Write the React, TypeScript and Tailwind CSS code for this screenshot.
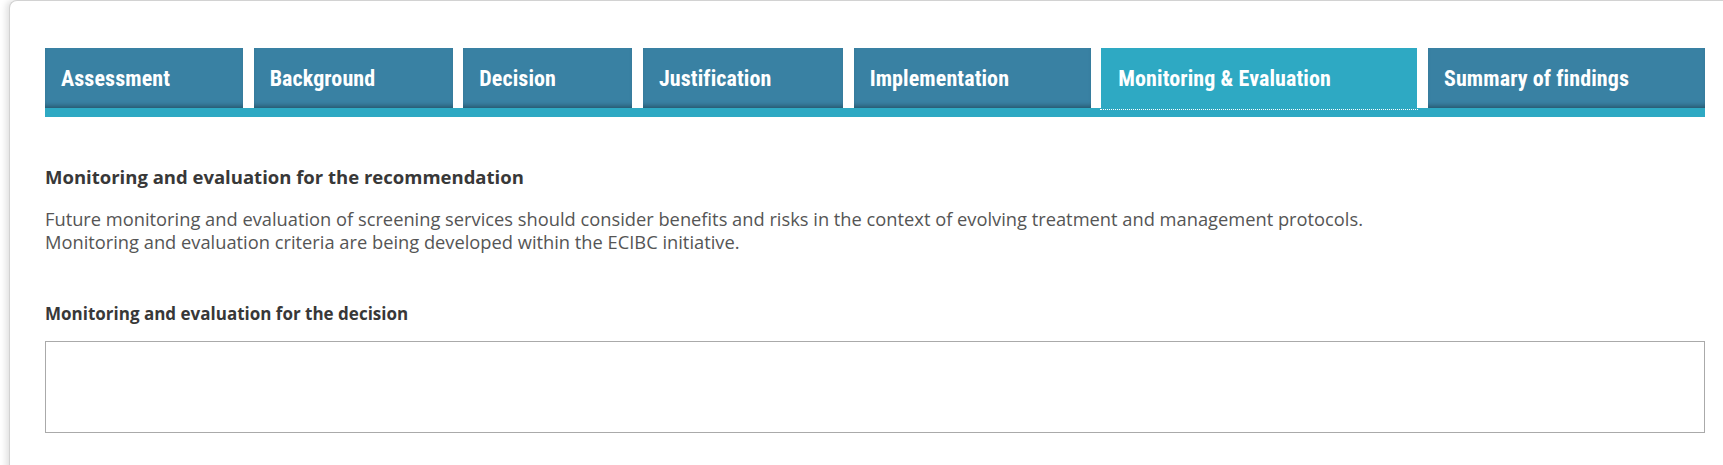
import React from "react";

const tabs = [
  { label: "Assessment", w: "w-[198px]" },
  { label: "Background", w: "w-[199px]" },
  { label: "Decision", w: "w-[169px]" },
  { label: "Justification", w: "w-[200px]" },
  { label: "Implementation", w: "w-[237px]" },
  { label: "Monitoring & Evaluation", w: "w-[316px]", active: true },
  { label: "Summary of findings", w: "w-[277px]" },
];

export default function App() {
  return (
    <div className="h-[465px] w-[1723px] overflow-hidden bg-white">
      <div className="ml-[9px] w-[1760px] h-[480px] rounded-tl-[8px] border-l border-t border-[#d2d2d2] bg-white pl-[35px] pt-[47px] shadow-[-3px_0_6px_rgba(0,0,0,0.12)]">
        <div className="w-[1660px]">
          <div className="flex justify-between">
            {tabs.map((t) => (
              <div
                key={t.label}
                className={
                  t.active
                    ? `${t.w} relative flex h-[60px] items-center bg-[#2ea9c3] pl-[17px] pt-[2px]`
                    : `${t.w} flex h-[60px] items-center bg-[#3981a3] pl-[16px] pt-[2px] shadow-[inset_0_-5px_5px_-3px_rgba(0,0,0,0.35)]`
                }
              >
                <span className="font-['Liberation_Sans_Narrow','Roboto_Condensed',Roboto,sans-serif] text-[22px] font-bold leading-none tracking-[0.1px] text-white">
                  {t.label}
                </span>
                {t.active && (
                  <span className="absolute bottom-[-2px] left-[-1px] right-[-1px] h-0 border-t border-dotted border-white" />
                )}
              </div>
            ))}
          </div>
          <div className="h-[9px] bg-[#2ea9c3]" />

          <div className="font-['Open_Sans',sans-serif]">
            <h2 className="mt-[48px] text-[18.5px] font-bold leading-[24px] text-[#383838]">
              Monitoring and evaluation for the recommendation
            </h2>
            <p className="mt-[18px] text-[18.3px] leading-[23px] text-[#555]">
              Future monitoring and evaluation of screening services should consider benefits and risks in the context of evolving treatment and management protocols.
              <br />
              Monitoring and evaluation criteria are being developed within the ECIBC initiative.
            </p>
            <h3 className="mt-[51px] text-[17px] font-bold leading-[20px] text-[#383838]">
              Monitoring and evaluation for the decision
            </h3>
            <div className="mt-[17px] h-[92px] border border-[#aaa] bg-white" />
          </div>
        </div>
      </div>
    </div>
  );
}
